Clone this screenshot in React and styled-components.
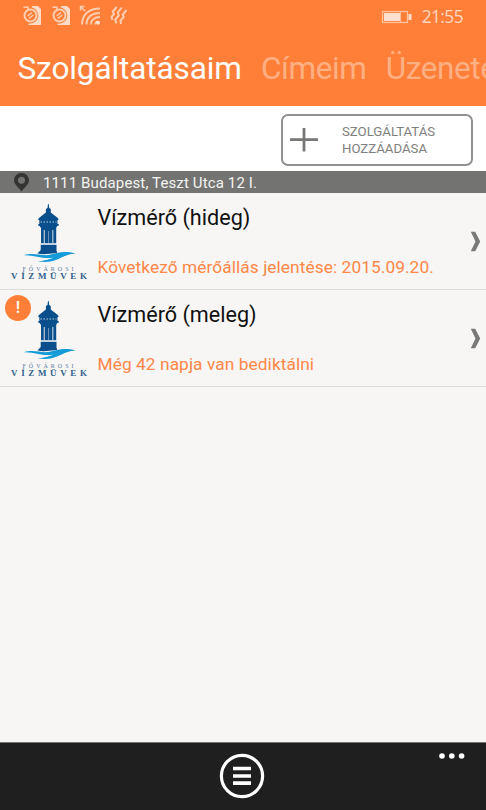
import React from "react";
import styled, { createGlobalStyle } from "styled-components";

const GlobalStyle = createGlobalStyle`
  * {
    box-sizing: border-box;
  }
  body {
    margin: 0;
    background: #f7f6f4;
    font-family: Roboto, "Noto Sans", sans-serif;
  }
`;

const Screen = styled.div`
  display: flex;
  flex-direction: column;
  width: 486px;
  height: 810px;
  overflow: hidden;
  background: #f7f6f4;
`;

const Header = styled.header`
  height: 106px;
  flex: none;
  background: #ff7f38;
`;

const StatusBar = styled.div`
  display: flex;
  justify-content: space-between;
  height: 34px;
  padding: 0 23px 0 21.5px;
`;

const StatusGroup = styled.div`
  display: flex;
  gap: ${(props) => props.$gap || "0"};
`;

const Clock = styled.span`
  font-family: "Open Sans", sans-serif;
  font-size: 17.4px;
  font-weight: 400;
  line-height: 32px;
  letter-spacing: -0.6px;
  color: #ffd6c0;
`;

const Tabs = styled.nav`
  display: flex;
  gap: 19.2px;
  padding-left: 17.5px;
  overflow: hidden;
`;

const Tab = styled.span`
  flex: none;
  font-size: 31.5px;
  line-height: 70px;
  letter-spacing: ${(props) => (props.$active ? "-0.1px" : "-0.4px")};
  white-space: nowrap;
  color: ${(props) => (props.$active ? "#fff" : "#ffb083")};
`;

const Toolbar = styled.div`
  display: flex;
  justify-content: flex-end;
  flex: none;
  height: 65px;
  padding: 8px 13px 0 0;
  background: #fff;
`;

const AddButton = styled.button`
  display: flex;
  align-items: center;
  gap: 24px;
  width: 192px;
  height: 52px;
  padding: 0 0 0 7px;
  border: 2px solid #91918f;
  border-radius: 7px;
  background: #fff;
  font-family: inherit;
  font-size: 13.2px;
  line-height: 17px;
  text-align: left;
  color: #80807e;
`;

const AddressBar = styled.div`
  display: flex;
  align-items: center;
  flex: none;
  gap: 13px;
  height: 22px;
  padding-left: 13px;
  background: #737371;
  font-size: 15px;
  line-height: 22px;
  letter-spacing: 0.13px;
  white-space: nowrap;
  color: #f3f3f2;
`;

const Address = styled.span`
  padding-top: 2px;
`;

const List = styled.main`
  flex: 1;
`;

const Row = styled.div`
  position: relative;
  display: flex;
  height: 97px;
  padding-left: 10px;
  border-bottom: 1px solid #dcdbd9;
`;

const LogoBox = styled.div`
  width: 87.5px;
  padding-top: 11px;
`;

const RowText = styled.div`
  flex: 1;
  padding-top: 10px;
  white-space: nowrap;
`;

const RowTitle = styled.div`
  font-size: 21.6px;
  line-height: 30px;
  color: #111;
`;

const RowNote = styled.div`
  margin-top: 21px;
  font-size: 17.3px;
  line-height: 26px;
  letter-spacing: 0.08px;
  color: #ff8748;
`;

const ArrowBox = styled.div`
  padding: 37.5px 5px 0 0;
`;

const Alert = styled.span`
  position: absolute;
  left: 5px;
  top: 5px;
  width: 26px;
  height: 26px;
  border-radius: 50%;
  background: #ff7f38;
  font-size: 16px;
  font-weight: 700;
  line-height: 26px;
  text-align: center;
  color: #ffeee5;
`;

const AppBar = styled.footer`
  position: relative;
  display: flex;
  justify-content: center;
  flex: none;
  height: 68px;
  padding: 10px 2px 0 0;
  border-top: 1px solid #777;
  background: #1f1f1f;
`;

const MoreBox = styled.div`
  position: absolute;
  top: 9px;
  right: 20px;
`;

const Svg = styled.svg`
  display: block;
  flex: none;
  overflow: visible;
`;

const SimIcon = () => (
  <Svg width="20" height="34" viewBox="0 0 20 34" fill="none">
    <path d="M10 6h6l3 3v16H6.500v-6z" fill="#ffdcc8" />
    <circle cx="8" cy="15.500" r="8.300" fill="#ff7f38" />
    <circle cx="8.500" cy="15.500" r="6" stroke="#ffcdb1" strokeWidth="2" />
    <path d="M1.500 7.200h4.500v3" stroke="#ffcdb1" strokeWidth="1.600" />
    <path d="M5.700 16l4.300-3.500M7 18.500l4.300-3.500" stroke="#ffcdb1" strokeWidth="1.500" />
  </Svg>
);

const WifiIcon = () => (
  <Svg width="21" height="34" viewBox="0 0 21 34" fill="none" stroke="#ffcdb1" strokeWidth="2">
    <path d="M1 24.500C1 14.500 8 8.500 19 8.500M5.500 24.500c0-7 5-11.500 13.500-11.500M10 24.500c0-4.500 3.500-7.500 9-7.500" />
    <path d="M14 24.500c.2-1.500.8-2.500 2-3.500" strokeWidth="1.500" />
    <path d="M-.5 10.500V6.500h4M-.5 6.500l4.500 4.500" strokeWidth="1.500" />
    <circle cx="17" cy="22.700" r="2" fill="#ffe3d3" stroke="none" />
  </Svg>
);

const VibrateIcon = () => (
  <Svg width="17" height="34" viewBox="0 0 17 34" fill="none" stroke="#ffcdb1" strokeWidth="2">
    <path d="M5.800 7L1.800 11.500l1.200 2.500-2.500 3 1 3M10.800 7.500L6.800 12.500l1 3-3.500 4 1 4M15.500 10l-3.800 4.500 1 2.500-3.200 3.500.5 3.500" />
  </Svg>
);

const BatteryIcon = () => (
  <Svg width="31" height="34" viewBox="0 0 31 34">
    <rect x="0.500" y="11.500" width="25" height="11" fill="none" stroke="#ffc09a" strokeWidth="1.300" />
    <rect x="2" y="13" width="16.500" height="8" fill="#ffe0d0" />
    <path d="M18.500 12v10" stroke="#ffc09a" />
    <rect x="26.500" y="14" width="3" height="6" fill="#ffdcc8" />
  </Svg>
);

const PlusIcon = () => (
  <Svg width="28" height="28" viewBox="0 0 28 28" stroke="#777775" strokeWidth="2.800">
    <path d="M0 13.700h28M14 2v23.500" />
  </Svg>
);

const PinIcon = () => (
  <Svg width="17" height="20" viewBox="0 0 17 20">
    <path
      fillRule="evenodd"
      fill="#343432"
      d="M8.500 1C4.300 1 1 4.200 1 8.200c0 4.300 4.500 6.800 7.500 11.300C11.500 15 16 12.500 16 8.200 16 4.200 12.700 1 8.500 1zm0 3.700a3.500 3.500 0 1 1 0 7 3.500 3.500 0 0 1 0-7z"
    />
  </Svg>
);

// water tower over two waves, with the company name below
const Logo = () => (
  <Svg width="78" height="78" viewBox="0 0 78 78">
    <g fill="#0a4f8c">
      <path d="M38 0h.7l.5 4 1.600 1v3.500l7 5.500.9 2H28l.9-2 7-5.500V5l1.600-1z" />
      <path d="M29.300 15.500h18.200v6l-1.500 2.500H31l-1.700-2.500z" />
      <path d="M28.300 20h20.400v1.800H28.300z" />
      <path d="M31 23.500h15.200v16H31z" />
      <path d="M30.700 40.500h15.800v6l.9 3C41 48.500 36 51.500 27.500 49.500l3.200-3.500z" />
    </g>
    <path d="M30.500 18h16" stroke="#7fa4c5" strokeWidth="1.400" strokeDasharray="1.500 1.500" />
    <path d="M34.300 26v13M42.800 26v13" stroke="#b5cbdd" strokeWidth="1.200" />
    <path d="M38.600 27v12" stroke="#6e97bb" strokeWidth="1" />
    <path d="M30 40h17" stroke="#edf1f4" strokeWidth="1.200" />
    <path d="M14 51.200c9-2.800 17 .8 23 0C47 49.500 53 45.800 65.500 49.500c-11 .3-14.500 5.800-25 8-5 .8-9 .3-13-.5 8 0 12-1.800 16-3.500-10 2.300-18.500-2.800-29.500-2.300z" fill="#149bd8" />
    <path d="M37 51.500c10-.5 15-4.500 28.500-2-9 .3-13.500 4.500-21.500 6.500-3 .8-7 1.200-10 1 5-.8 9-2.300 11-4.300-3 .5-10 .8-14-.7z" fill="#149bd8" />
    <g fontFamily="Liberation Serif, serif">
      <text x="12.500" y="66.500" fontSize="6" textLength="51" fill="#5f80a3">FŐVÁROSI</text>
      <text x="1" y="75.300" fontSize="9" fontWeight="700" textLength="76" fill="#315f8d">VÍZMŰVEK</text>
    </g>
  </Svg>
);

const ArrowIcon = () => (
  <Svg width="11" height="21" viewBox="0 0 11 21">
    <path d="M.8.700h4.400l5 9.800-5 9.700H.8l4.700-9.700z" fill="#797977" />
  </Svg>
);

const MenuIcon = () => (
  <Svg width="46" height="46" viewBox="0 0 46 46" stroke="#fff" fill="none">
    <circle cx="23" cy="23" r="20.600" strokeWidth="3.200" />
    <path d="M14 15.500h18M14 23h18M14 30.200h18" strokeWidth="3.700" />
  </Svg>
);

const MoreIcon = () => (
  <Svg width="28" height="8" viewBox="0 0 28 8" fill="#fff">
    <circle cx="4" cy="4" r="2.800" />
    <circle cx="13.800" cy="4" r="2.800" />
    <circle cx="23.600" cy="4" r="2.800" />
  </Svg>
);

const services = [
  { title: "Vízmérő (hideg)", note: "Következő mérőállás jelentése: 2015.09.20." },
  { title: "Vízmérő (meleg)", note: "Még 42 napja van bediktálni", alert: true },
];

export default function App() {
  return (
    <>
      <GlobalStyle />
      <Screen>
        <Header>
          <StatusBar>
            <StatusGroup $gap="9.5px">
              <SimIcon />
              <SimIcon />
              <WifiIcon />
              <VibrateIcon />
            </StatusGroup>
            <StatusGroup $gap="9px">
              <BatteryIcon />
              <Clock>21:55</Clock>
            </StatusGroup>
          </StatusBar>
          <Tabs>
            <Tab $active>Szolgáltatásaim</Tab>
            <Tab>Címeim</Tab>
            <Tab>Üzenetek</Tab>
          </Tabs>
        </Header>
        <Toolbar>
          <AddButton>
            <PlusIcon />
            <span>
              SZOLGÁLTATÁS
              <br />
              HOZZÁADÁSA
            </span>
          </AddButton>
        </Toolbar>
        <AddressBar>
          <PinIcon />
          <Address>1111 Budapest, Teszt Utca 12 I.</Address>
        </AddressBar>
        <List>
          {services.map((service) => (
            <Row key={service.title}>
              <LogoBox>
                <Logo />
              </LogoBox>
              <RowText>
                <RowTitle>{service.title}</RowTitle>
                <RowNote>{service.note}</RowNote>
              </RowText>
              <ArrowBox>
                <ArrowIcon />
              </ArrowBox>
              {service.alert && <Alert>!</Alert>}
            </Row>
          ))}
        </List>
        <AppBar>
          <MenuIcon />
          <MoreBox>
            <MoreIcon />
          </MoreBox>
        </AppBar>
      </Screen>
    </>
  );
}
